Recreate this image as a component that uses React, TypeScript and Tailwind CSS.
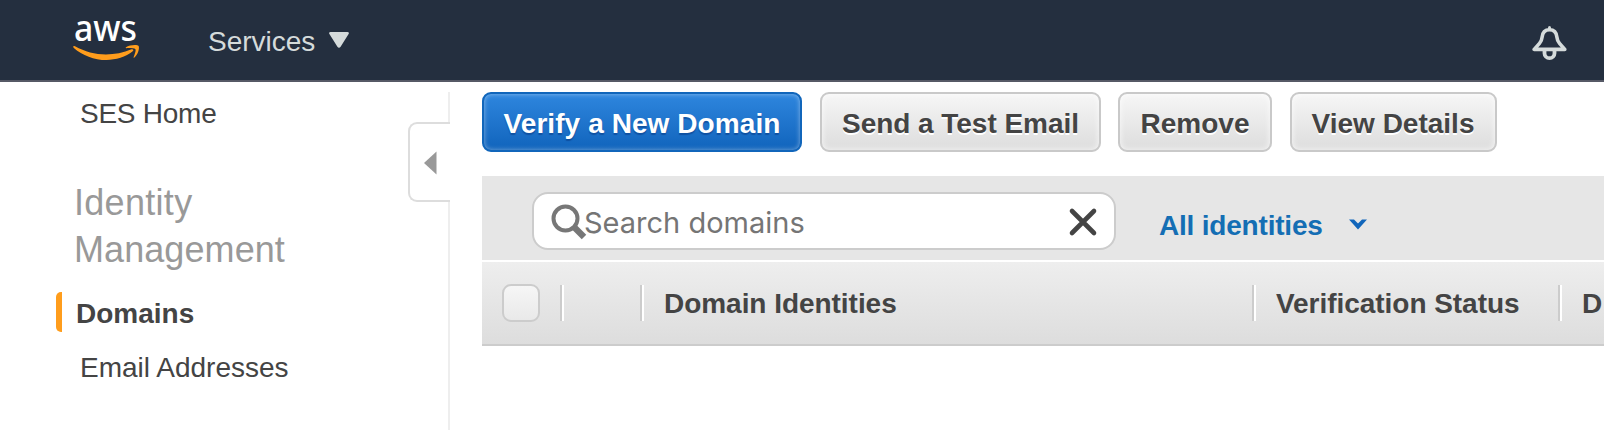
import type { ReactNode } from "react";

function AwsLogo() {
  return (
    <svg width="72" height="72" viewBox="-2 -15 72 72" className="block" role="img" aria-label="aws">
      <text
        x="1"
        y="26.200"
        fill="#fff"
        fontFamily="'Noto Sans', 'Open Sans', sans-serif"
        fontSize="37"
        fontWeight="500"
        textLength="63"
        lengthAdjust="spacingAndGlyphs"
      >
        aws
      </text>
      <path
        d="M0.200 31.800c0-1 .8-1.100 1.800-.5C12 36.700 22 39.500 33 39.500c8.500 0 17.500-1.800 25.500-5.200 1.500-.6 2.600 1 1.200 2C53 41.800 42.500 45 33.500 45 21 45 9.500 40.300 0.800 32.900c-.4-.3-.6-.7-.6-1.100z"
        fill="#ff9d1c"
      />
      <path
        d="M53.200 33.200c-.5 0-.7-.5-.2-.9 3.200-2.300 11.200-3 12.600-1.300 1.200 1.700-.6 8.800-4.200 11.600-.5.500-1 .2-.8-.4.900-2.300 2.600-6.800 1.800-8-.9-1.100-6.600-1.200-9.200-1z"
        fill="#ff9d1c"
      />
    </svg>
  );
}

function TopBar() {
  return (
    <header className="box-border flex h-[82px] items-start border-b-2 border-[#565966] bg-[#242f3f] pl-[71px] pr-[36px]">
      <AwsLogo />
      <button className="ml-[65px] mt-[26px] flex items-start text-[#d5dbdb]">
        <span className="text-[28px] leading-8">Services</span>
        <svg width="22" height="18" viewBox="0 0 22 18" className="ml-[13px] mt-[5px]" aria-hidden="true">
          <path
            d="M2.500 1h17c1.400 0 1.800 1.100 1.100 2.100l-8 12.700c-.8 1.200-2.400 1.200-3.200 0l-8-12.700C.7 2.100 1.100 1 2.500 1z"
            fill="currentColor"
          />
        </svg>
      </button>
      <button className="ml-auto mt-[25px] text-[#d5dbdb]" aria-label="Notifications">
        <svg width="36" height="36" viewBox="0 0 36 36" fill="none" stroke="currentColor" strokeLinejoin="round" strokeLinecap="round">
          <path d="M17.500 2.500v2" strokeWidth="3" />
          <path
            d="M17.500 4.800c-4.600 0-7 3-7.400 7.400-.3 3.200-.8 4.200-2.600 6.200l-5.300 6h30.600l-5.300-6c-1.800-2-2.300-3-2.600-6.200-.4-4.400-2.800-7.400-7.400-7.400z"
            strokeWidth="3.600"
          />
          <path d="M12.500 25.500v2.700a5 5 0 0 0 10 0v-2.700" strokeWidth="3.800" />
        </svg>
      </button>
    </header>
  );
}

function Sidebar() {
  return (
    <nav className="relative w-[450px] shrink-0 pt-[10px] text-[28px] text-[#444]">
      <div className="h-full border-r-2 border-[#eee]">
        <a className="block pl-20 pt-[6px] leading-8 tracking-[-0.25px]">SES Home</a>
        <h2 className="mt-[49px] pl-[74px] text-[36px] leading-[47px] tracking-[0.08px] text-[#999]">
          <span className="tracking-[0.3px]">Identity</span>
          <br />
          Management
        </h2>
        <div className="mt-[19px] flex h-10 items-center">
          <span className="ml-14 h-10 w-[6px] rounded-l-[5px] bg-[#ff9d1c]" />
          <a className="ml-[14px] pt-[3px] font-bold leading-8">Domains</a>
        </div>
        <a className="mt-[20px] block pl-[80px] leading-8">Email Addresses</a>
      </div>
      <button
        className="absolute right-0 top-[40px] box-border flex h-20 w-[42px] items-center rounded-l-[9px] border-2 border-r-0 border-[#ddd] bg-white pl-[14px] pt-[2px]"
        aria-label="Collapse navigation"
      >
        <svg width="13" height="24" viewBox="0 0 13 24" aria-hidden="true">
          <path d="M12.500 0.500v23L0 12z" fill="#999" />
        </svg>
      </button>
    </nav>
  );
}

function ActionButton({ children, className }: { children: ReactNode; className: string }) {
  return (
    <button
      className={
        "box-border flex h-[60px] shrink-0 justify-center whitespace-nowrap rounded-[9px] border-2 pt-[14px] text-[28px] font-bold leading-8 " +
        className
      }
    >
      {children}
    </button>
  );
}

const secondary =
  "border-[#c9c9c9] bg-gradient-to-b from-[#f6f6f6] to-[#dddddd] text-[#444] shadow-[inset_0_0_6px_rgba(255,255,255,0.8)] [text-shadow:0_2px_0_#fff] ";

function Actions() {
  return (
    <div className="flex">
      <ActionButton className="w-[320px] border-[#1166bb] tracking-[0.08px] bg-gradient-to-b from-[#2e86de] to-[#1064bc] text-white shadow-[inset_0_0_5px_rgba(255,255,255,0.45)] [text-shadow:0_2px_1px_rgba(0,40,110,0.4)]">
        Verify a New Domain
      </ActionButton>
      <ActionButton className={secondary + "ml-[18px] w-[281px] tracking-[-0.04px]"}>Send a Test Email</ActionButton>
      <ActionButton className={secondary + "ml-[17px] w-[154px]"}>Remove</ActionButton>
      <ActionButton className={secondary + "ml-[18px] w-[207px] pr-px"}>View Details</ActionButton>
    </div>
  );
}

function Toolbar() {
  return (
    <div className="mt-6 flex h-[84px] items-start bg-[#e6e6e6] pl-[50px] pt-4">
      <div className="box-border flex h-[58px] w-[584px] shrink-0 items-start rounded-[16px] border-2 border-[#ccc] bg-white pl-[16px]">
        <svg width="38" height="38" viewBox="0 0 38 38" className="mt-[9px] shrink-0" aria-hidden="true">
          <circle cx="15.500" cy="15.500" r="12" fill="none" stroke="#777" strokeWidth="4" />
          <path d="M24 24L34 34" stroke="#777" strokeWidth="6.400" />
        </svg>
        <span className="ml-[-4px] mt-[11px] whitespace-nowrap font-['Inter'] text-[29px] leading-9 text-[#757575]">
          Search domains
        </span>
        <svg width="30" height="30" viewBox="0 0 30 30" className="ml-auto mr-[16px] mt-[13px] shrink-0" aria-hidden="true">
          <path d="M4 4l22 22M26 4L4 26" stroke="#444" strokeWidth="4.600" strokeLinecap="round" />
        </svg>
      </div>
      <button className="ml-[43px] mt-[18px] flex items-start whitespace-nowrap text-[28px] font-bold leading-8 tracking-[-0.2px] text-[#146eb4]">
        All identities
        <svg width="20" height="13" viewBox="0 0 20 13" className="ml-[25px] mt-[8px]" aria-hidden="true">
          <path d="M1 1.500h5l4 4 4-4h5L10 11.500z" fill="#1166bb" />
        </svg>
      </button>
    </div>
  );
}

function Separator() {
  return <span className="mt-[23px] h-9 w-1 shrink-0 border-l-2 border-r-2 border-l-[#ccc] border-r-white" />;
}

function HeaderCell({ children, className }: { children?: ReactNode; className: string }) {
  return (
    <div className={"flex shrink-0 items-start overflow-hidden " + className}>
      <Separator />
      <span className="ml-[20px] mt-[26px] whitespace-nowrap tracking-[-0.04px]">{children}</span>
    </div>
  );
}

function TableHeader() {
  return (
    <div className="mt-[2px] box-border flex h-[84px] overflow-hidden border-b-2 border-[#ccc] bg-gradient-to-b from-[#eeeeee] to-[#dddddd] text-[28px] font-bold leading-8 text-[#444]">
      <div className="w-[78px] shrink-0 pl-5 pt-[22px]">
        <div className="box-border h-[38px] w-[38px] rounded-[9px] border-2 border-[#ccc] bg-gradient-to-b from-[#f6f6f6] to-[#e9e9e9]" />
      </div>
      <HeaderCell className="w-[80px]" />
      <HeaderCell className="w-[612px]">Domain Identities</HeaderCell>
      <HeaderCell className="w-[306px]">Verification Status</HeaderCell>
      <HeaderCell className="w-[46px]">D</HeaderCell>
    </div>
  );
}

export default function App() {
  return (
    <div className="flex h-[430px] w-[1604px] flex-col overflow-hidden bg-white font-['Liberation_Sans',Arial,sans-serif]">
      <TopBar />
      <div className="flex min-h-0 flex-1">
        <Sidebar />
        <main className="min-w-0 flex-1 pl-8 pt-[10px]">
          <Actions />
          <Toolbar />
          <TableHeader />
        </main>
      </div>
    </div>
  );
}
